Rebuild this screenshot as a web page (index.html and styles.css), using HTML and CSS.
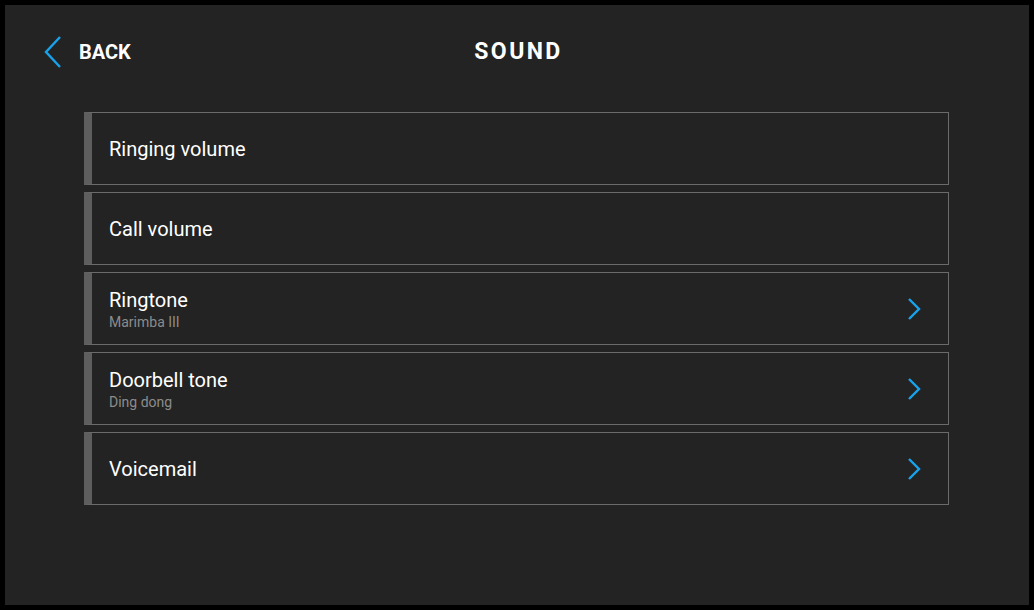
FILE: index.html
```html
<!DOCTYPE html>
<html lang="en">
<head>
  <meta charset="UTF-8" />
  <meta name="viewport" content="width=device-width, initial-scale=1.0" />
  <title>Sound</title>
  <link rel="stylesheet" href="styles.css">
</head>
<body>
  <div class="screen">
    <header class="topbar">
      <a class="back" href="#">
        <svg class="back-icon" width="18" height="34" viewBox="0 0 18 34">
          <polyline points="16,2 2,17 16,32" fill="none" stroke="#17a4ec" stroke-width="2.4" />
        </svg>
        <span>BACK</span>
      </a>
      <h1>SOUND</h1>
    </header>

    <ul class="menu">
      <li class="item">
        <div class="label">Ringing volume</div>
      </li>
      <li class="item">
        <div class="label">Call volume</div>
      </li>
      <li class="item link">
        <div class="label">Ringtone<small>Marimba III</small></div>
        <svg class="chev" width="14" height="24" viewBox="0 0 14 24">
          <polyline points="2,2 12,12 2,22" fill="none" stroke="#17a4ec" stroke-width="2.4" />
        </svg>
      </li>
      <li class="item link">
        <div class="label">Doorbell tone<small>Ding dong</small></div>
        <svg class="chev" width="14" height="24" viewBox="0 0 14 24">
          <polyline points="2,2 12,12 2,22" fill="none" stroke="#17a4ec" stroke-width="2.4" />
        </svg>
      </li>
      <li class="item link">
        <div class="label">Voicemail</div>
        <svg class="chev" width="14" height="24" viewBox="0 0 14 24">
          <polyline points="2,2 12,12 2,22" fill="none" stroke="#17a4ec" stroke-width="2.4" />
        </svg>
      </li>
    </ul>
  </div>
</body>
</html>
```

FILE: styles.css
```css
* {
  box-sizing: border-box;
  margin: 0;
  padding: 0;
}

body {
  background-color: #000;
  color: #fff;
  font-family: Roboto, "Liberation Sans", sans-serif;
  padding: 5px;
}

.screen {
  width: 1024px;
  height: 600px;
  background-color: #232323;
}

.topbar {
  position: relative;
  height: 107px;
  display: flex;
  align-items: center;
  justify-content: center;
  padding-bottom: 14px;
}

.topbar h1 {
  font-size: 23px;
  font-weight: 700;
  letter-spacing: 2.4px;
  padding-left: 3px;
}

.back {
  position: absolute;
  left: 39px;
  top: 30px;
  display: flex;
  align-items: center;
  gap: 17px;
  color: #fff;
  text-decoration: none;
  font-size: 20px;
  font-weight: 700;
}

.menu {
  list-style: none;
  width: 865px;
  margin-left: 79px;
  display: flex;
  flex-direction: column;
  gap: 7px;
}

.item {
  height: 73px;
  display: flex;
  align-items: center;
  justify-content: space-between;
  border: 1px solid #6b6b6b;
  border-left: 8px solid #5e5e5e;
  padding: 0 27px 0 17px;
}

.label {
  font-size: 20px;
  display: flex;
  flex-direction: column;
}

.label small {
  font-size: 14px;
  color: #8c8c8c;
  margin-top: 2px;
}

.chev {
  display: block;
}
```
